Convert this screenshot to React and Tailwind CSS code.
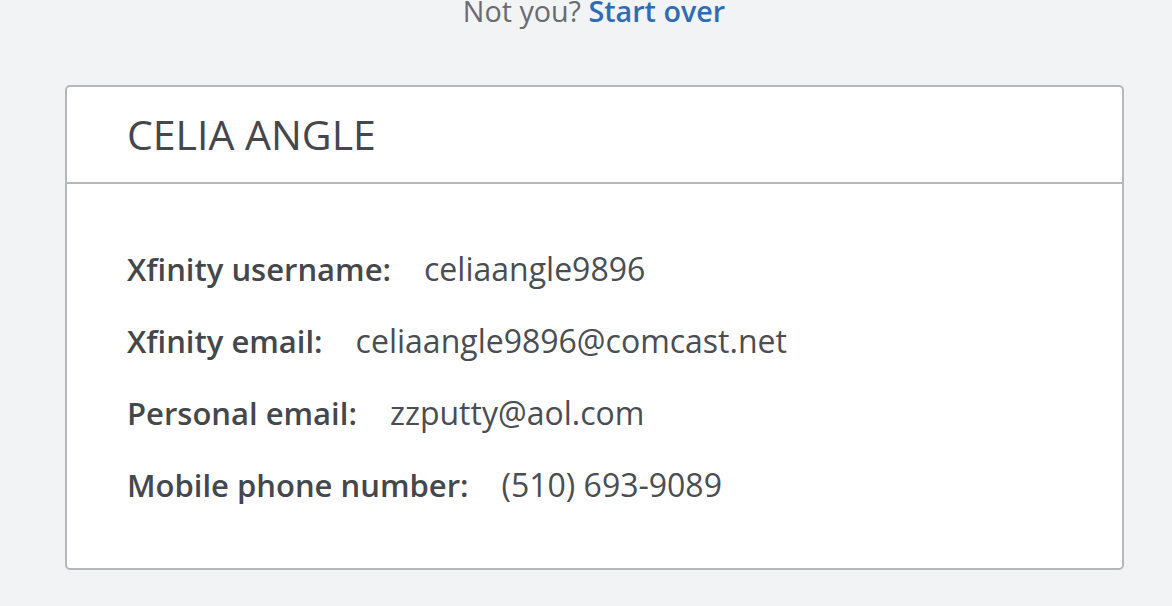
import React from 'react';

const rows = [
  { label: 'Xfinity username:', value: 'celiaangle9896' },
  { label: 'Xfinity email:', value: 'celiaangle9896@comcast.net' },
  { label: 'Personal email:', value: 'zzputty@aol.com' },
  { label: 'Mobile phone number:', value: '(510) 693-9089' },
];

export default function App() {
  return (
    <div
      className="min-h-[606px] w-full bg-[#f2f3f5] overflow-hidden"
      style={{ fontFamily: '"Open Sans", "Noto Sans", sans-serif' }}
    >
      <p className="h-[85px] pl-[16px] text-center text-[28.7px] leading-[22px] text-[#686b70]">
        Not you? <a className="font-semibold text-[#2e6db4]">Start over</a>
      </p>

      <div className="ml-[65px] w-[1059px] rounded-[5px] border-2 border-[#b4b8bc] bg-white">
        <div className="flex h-[97px] items-center border-b-2 border-[#b4b8bc] pl-[60px]">
          <h1 className="text-[41px] font-normal text-[#44474c]">CELIA ANGLE</h1>
        </div>

        <div className="pt-[49px] pb-[47px] pl-[60px]">
          {rows.map((row) => (
            <div key={row.label} className="flex h-[72px] items-center text-[#44474c]">
              <span className="text-[31px] font-semibold">{row.label}</span>
              <span className="ml-[33px] text-[32px] text-[#4a4d52]">{row.value}</span>
            </div>
          ))}
        </div>
      </div>
    </div>
  );
}
